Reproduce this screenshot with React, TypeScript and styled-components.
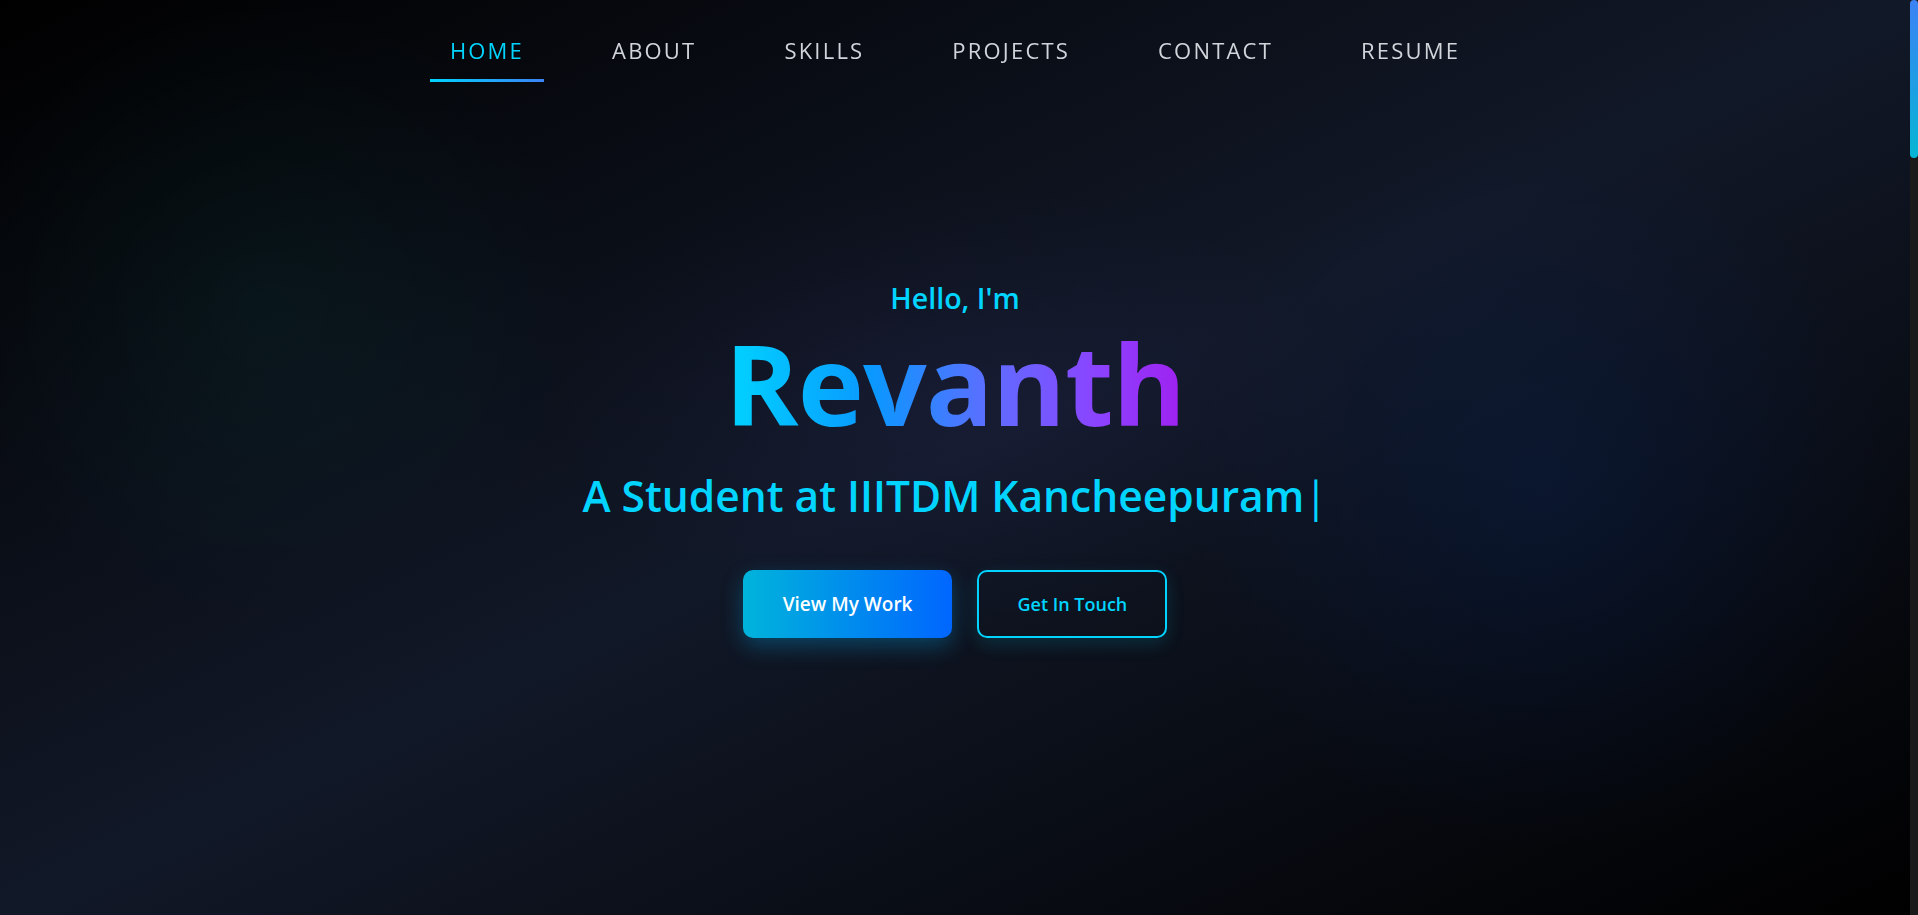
import React from "react";
import styled, { createGlobalStyle } from "styled-components";

const GlobalStyle = createGlobalStyle`
  html, body {
    margin: 0;
    padding: 0;
    background: #000000;
    font-family: "Open Sans", "Noto Sans", "Liberation Sans", sans-serif;
    overflow: hidden;
  }
  * { box-sizing: border-box; }
`;

const Page = styled.div`
  margin-right: 8px;
`;

const ScrollTrack = styled.div`
  position: fixed;
  top: 0;
  right: 0;
  bottom: 0;
  width: 8px;
  background: #1a1a1a;
  z-index: 20;
`;

const ScrollThumb = styled.div`
  height: 158px;
  border-radius: 4px;
  background: linear-gradient(180deg, #3b82f6 0%, #06b6d4 100%);
`;

const NavBar = styled.nav`
  position: fixed;
  top: 0;
  left: 0;
  right: 8px;
  z-index: 10;
  display: flex;
  justify-content: center;
  gap: 48px;
  padding-top: 19px;
`;

const NavLink = styled.a<{ $active?: boolean }>`
  position: relative;
  display: block;
  padding: 16px 20px 17px;
  font-size: 22px;
  line-height: 30px;
  font-weight: 400;
  letter-spacing: 2.2px;
  color: ${(p) => (p.$active ? "#00d4ff" : "#d1d5db")};
  text-decoration: none;
  cursor: pointer;

  &::after {
    content: "";
    position: absolute;
    left: 0;
    right: 0;
    bottom: 0;
    height: 3px;
    background: linear-gradient(90deg, #00d4ff, #3b82f6);
    opacity: ${(p) => (p.$active ? 1 : 0)};
  }
`;

const Hero = styled.section`
  min-height: 100vh;
  display: flex;
  align-items: center;
  justify-content: center;
  background:
    radial-gradient(circle at 14% 34%, rgba(0, 255, 200, 0.045) 0%, rgba(0, 255, 200, 0) 18%),
    radial-gradient(circle at 81% 54%, rgba(0, 90, 255, 0.09) 0%, rgba(0, 90, 255, 0) 22%),
    radial-gradient(ellipse at 50% 44%, rgba(110, 90, 230, 0.07) 0%, rgba(110, 90, 230, 0) 30%),
    linear-gradient(to bottom right, #000000 0%, #111827 50%, #000000 100%);
`;

const HeroContent = styled.div`
  display: flex;
  flex-direction: column;
  align-items: center;
  text-align: center;
  margin-top: 4px;
`;

const Greeting = styled.p`
  margin: 0;
  font-size: 28.6px;
  line-height: 34px;
  font-weight: 600;
  color: #00d4ff;
`;

const Name = styled.h1`
  margin: 6px 0 0;
  font-size: 112px;
  line-height: 1.1;
  font-weight: 700;
  letter-spacing: -1px;
  background: linear-gradient(90deg, #00d4ff 0%, #0a98ff 32%, #5f6cff 58%, #8a45ff 80%, #a020f0 100%);
  -webkit-background-clip: text;
  background-clip: text;
  color: transparent;
`;

const Subtitle = styled.h2`
  margin: 24px 0 0;
  font-size: 42.5px;
  line-height: 1.3;
  font-weight: 600;
  color: #00d4ff;
`;

const Caret = styled.span`
  font-weight: 400;
`;

const ButtonRow = styled.div`
  display: flex;
  gap: 25px;
  margin-top: 47px;
`;

const Button = styled.a<{ $primary?: boolean }>`
  display: inline-flex;
  align-items: center;
  justify-content: center;
  height: 68px;
  padding: 0 ${(p) => (p.$primary ? "40px" : "38px")};
  border-radius: 10px;
  font-size: ${(p) => (p.$primary ? "19px" : "18px")};
  font-weight: 600;
  text-decoration: none;
  cursor: pointer;
  color: ${(p) => (p.$primary ? "#ffffff" : "#00d4ff")};
  background: ${(p) => (p.$primary ? "linear-gradient(90deg, #00b4db 0%, #0066ff 100%)" : "transparent")};
  border: ${(p) => (p.$primary ? "none" : "2px solid #00d4ff")};
  box-shadow: ${(p) =>
    p.$primary ? "0 8px 22px rgba(0, 180, 255, 0.3)" : "0 6px 18px rgba(0, 212, 255, 0.15)"};
`;

const links = ["HOME", "ABOUT", "SKILLS", "PROJECTS", "CONTACT", "RESUME"];

export default function App() {
  return (
    <>
      <GlobalStyle />
      <Page>
        <NavBar>
          {links.map((l, i) => (
            <NavLink key={l} $active={i === 0}>
              {l}
            </NavLink>
          ))}
        </NavBar>
        <Hero id="home">
          <HeroContent>
            <Greeting>Hello, I'm</Greeting>
            <Name>Revanth</Name>
            <Subtitle>
              A Student at IIITDM Kancheepuram<Caret>|</Caret>
            </Subtitle>
            <ButtonRow>
              <Button $primary>View My Work</Button>
              <Button>Get In Touch</Button>
            </ButtonRow>
          </HeroContent>
        </Hero>
      </Page>
      <ScrollTrack>
        <ScrollThumb />
      </ScrollTrack>
    </>
  );
}
